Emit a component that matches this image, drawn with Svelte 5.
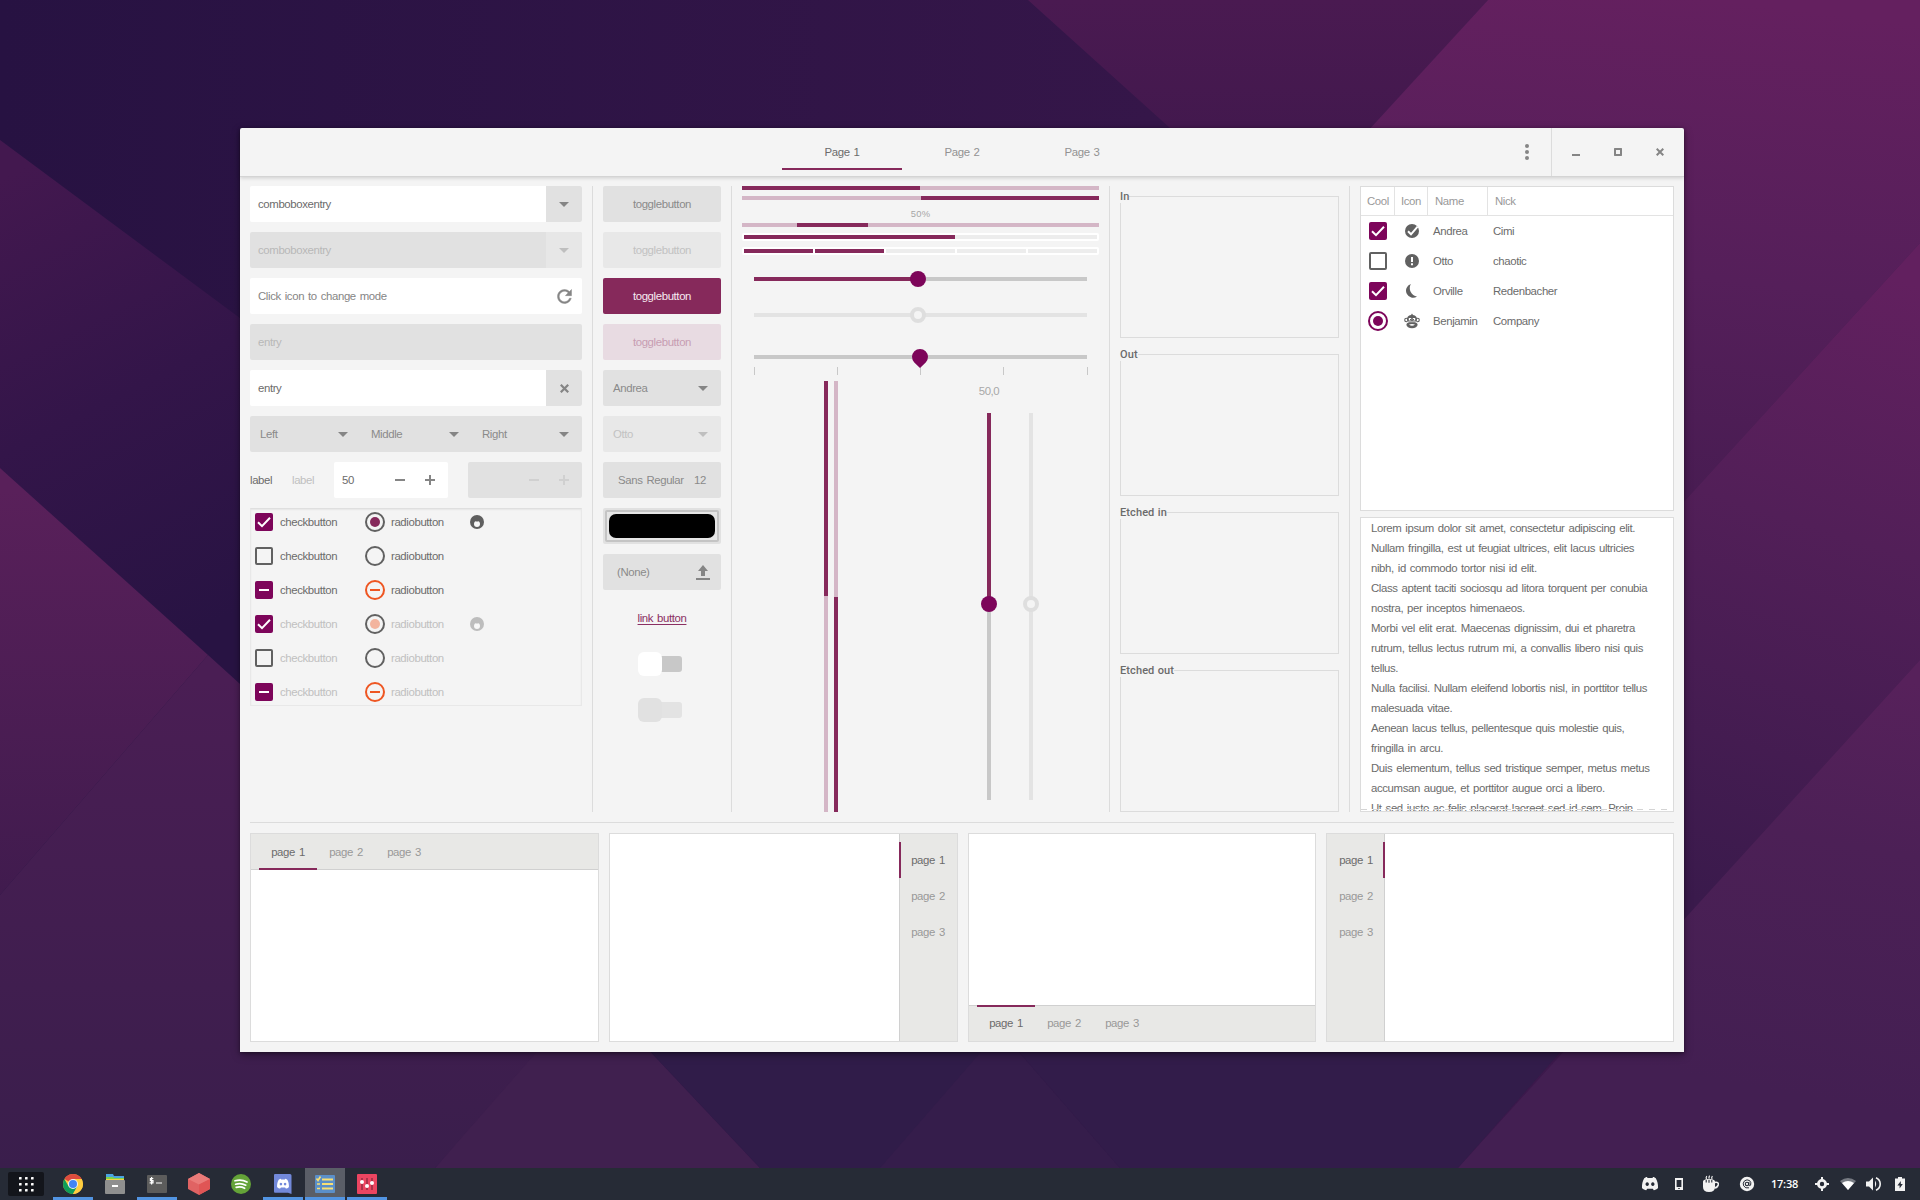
<script lang="ts">
  const headerTabs = ['Page 1', 'Page 2', 'Page 3'];
  const bookTabs = ['page 1', 'page 2', 'page 3'];
  const books = ['top', 'right', 'bottom', 'left'];
  const linked = ['Left', 'Middle', 'Right'];
  const frames = ['In', 'Out', 'Etched in', 'Etched out'];
  const choices = [
    { kind: 'on', disabled: false },
    { kind: 'off', disabled: false },
    { kind: 'mixed', disabled: false },
    { kind: 'on', disabled: true },
    { kind: 'off', disabled: true },
    { kind: 'mixed', disabled: true },
  ];
  const people = [
    { cool: 'on', icon: 'check', name: 'Andrea', nick: 'Cimi' },
    { cool: 'off', icon: 'alert', name: 'Otto', nick: 'chaotic' },
    { cool: 'on', icon: 'moon', name: 'Orville', nick: 'Redenbacher' },
    { cool: 'radio', icon: 'monkey', name: 'Benjamin', nick: 'Company' },
  ];
  const lines = [
    'Lorem ipsum dolor sit amet, consectetur adipiscing elit.',
    'Nullam fringilla, est ut feugiat ultrices, elit lacus ultricies',
    'nibh, id commodo tortor nisi id elit.',
    'Class aptent taciti sociosqu ad litora torquent per conubia',
    'nostra, per inceptos himenaeos.',
    'Morbi vel elit erat. Maecenas dignissim, dui et pharetra',
    'rutrum, tellus lectus rutrum mi, a convallis libero nisi quis',
    'tellus.',
    'Nulla facilisi. Nullam eleifend lobortis nisl, in porttitor tellus',
    'malesuada vitae.',
    'Aenean lacus tellus, pellentesque quis molestie quis,',
    'fringilla in arcu.',
    'Duis elementum, tellus sed tristique semper, metus metus',
    'accumsan augue, et porttitor augue orci a libero.',
    'Ut sed justo ac felis placerat laoreet sed id sem. Proin',
  ];
  const apps = [
    { id: 'chrome', running: true },
    { id: 'files', running: false },
    { id: 'terminal', running: true },
    { id: 'cube', running: false },
    { id: 'spotify', running: false },
    { id: 'discord', running: true },
    { id: 'list', running: true, active: true },
    { id: 'mixer', running: true },
  ];
  const discord =
    'M4.2 4.2 C5.4 3.4 6.4 3.1 7 3 L7.5 3.9 H12.5 L13 3 C13.7 3.1 14.7 3.4 15.8 4.2 C17.4 7 18.2 10 18 14 C16.7 15.4 15.2 16 13.8 16.2 L12.8 14.7 H7.2 L6.2 16.2 C4.8 16 3.3 15.4 2 14 C1.8 10 2.6 7 4.2 4.2 Z M7.2 8.2 a1.7 1.9 0 1 0 .01 0 Z M12.8 8.2 a1.7 1.9 0 1 0 .01 0 Z';
</script>

{#snippet arrow()}
  <svg class="arrow" width="10" height="5" viewBox="0 0 10 5"><path d="M0 0H10L5 5Z" /></svg>
{/snippet}

{#snippet check(kind: string)}
  <svg class="mark" width="18" height="18" viewBox="0 0 18 18">
    {#if kind === 'off'}
      <rect x="1" y="1" width="16" height="16" rx="1" fill="none" stroke="#616161" stroke-width="2" />
    {:else}
      <rect width="18" height="18" rx="2" fill="#7d055a" />
      {#if kind === 'on'}
        <path d="M3 9.3 L7 13.2 L15 4.8" fill="none" stroke="#fff" stroke-width="2" />
      {:else}
        <rect x="4" y="8" width="10" height="2" fill="#fff" />
      {/if}
    {/if}
  </svg>
{/snippet}

{#snippet radio(kind: string, ring: string, dot: string)}
  <svg class="mark" width="20" height="20" viewBox="0 0 20 20">
    <circle cx="10" cy="10" r="9" fill="none" stroke={kind === 'mixed' ? '#ee5622' : ring} stroke-width="2" />
    {#if kind === 'on'}<circle cx="10" cy="10" r="5" fill={dot} />{/if}
    {#if kind === 'mixed'}<rect x="5" y="9" width="10" height="2" fill="#ee5622" />{/if}
  </svg>
{/snippet}

{#snippet spin(value: string, disabled: boolean)}
  <div class={['entry', 'spin', disabled && 'off']}>
    <span>{value}</span>
    <svg width="60" height="30" viewBox="0 0 60 30">
      <path d="M10 15H20M40 15H50M45 10V20" fill="none" stroke="currentColor" stroke-width="2" />
    </svg>
  </div>
{/snippet}

<div class="desktop">
  <svg class="wallpaper" viewBox="0 0 1920 1168" preserveAspectRatio="none">
    <defs>
      <linearGradient id="base" x1="0" y1="0" x2="1" y2="0">
        <stop offset="0" stop-color="#271242" /><stop offset=".6" stop-color="#351649" /><stop offset="1" stop-color="#431c4e" />
      </linearGradient>
      <linearGradient id="mid" x1="0" y1="0" x2="0" y2="1">
        <stop offset="0" stop-color="#4a1a51" /><stop offset="1" stop-color="#3c174b" />
      </linearGradient>
      <linearGradient id="ne" gradientUnits="userSpaceOnUse" x1="1720" y1="0" x2="1660" y2="500">
        <stop offset="0" stop-color="#64205f" /><stop offset=".55" stop-color="#551f5a" /><stop offset="1" stop-color="#481c52" />
      </linearGradient>
      <linearGradient id="e" gradientUnits="userSpaceOnUse" x1="1900" y1="280" x2="1700" y2="900">
        <stop offset="0" stop-color="#62205f" /><stop offset=".4" stop-color="#521f58" /><stop offset="1" stop-color="#3a1a4c" />
      </linearGradient>
      <linearGradient id="se" gradientUnits="userSpaceOnUse" x1="1900" y1="680" x2="1820" y2="1100">
        <stop offset="0" stop-color="#57215b" /><stop offset=".4" stop-color="#4c2056" /><stop offset="1" stop-color="#431f52" />
      </linearGradient>
      <linearGradient id="w" gradientUnits="userSpaceOnUse" x1="0" y1="180" x2="220" y2="620">
        <stop offset="0" stop-color="#43184f" /><stop offset=".5" stop-color="#331549" /><stop offset="1" stop-color="#281343" />
      </linearGradient>
      <linearGradient id="sw" gradientUnits="userSpaceOnUse" x1="0" y1="490" x2="0" y2="900">
        <stop offset="0" stop-color="#59205a" /><stop offset="1" stop-color="#401b4e" />
      </linearGradient>
      <linearGradient id="sw2" gradientUnits="userSpaceOnUse" x1="200" y1="680" x2="200" y2="1168">
        <stop offset="0" stop-color="#4a1e54" /><stop offset="1" stop-color="#3a1e4c" />
      </linearGradient>
    </defs>
    <rect width="1920" height="1168" fill="url(#base)" />
    <path d="M1028 0H1488L1371 128L1300 250L1170 128Z" fill="url(#mid)" />
    <path d="M1488 0H1920V243L1660 528L1300 205Z" fill="url(#ne)" />
    <path d="M1920 243V660L1660 946V528Z" fill="url(#e)" />
    <path d="M1920 660V1168H1458L1660 946Z" fill="url(#se)" />
    <path d="M0 140L260 333V702L0 468Z" fill="url(#w)" />
    <path d="M0 468L208 655L0 895Z" fill="url(#sw)" />
    <path d="M208 655L260 702V1030H560L435 1168H0V895Z" fill="url(#sw2)" />
    <path d="M435 1168L556 1030H630L760 1168Z" fill="#40204f" />
    <path d="M760 1168L630 1030H1000L1120 1168Z" fill="#301c49" />
    <path d="M880 1168L1000 1030L1120 1168Z" fill="#351d4b" />
    <path d="M1120 1168L1000 1030H1580L1458 1168Z" fill="#321c4a" />
  </svg>

  <main class="window">
    <header class="titlebar">
      <div class="lead"></div>
      <nav class="switcher">
        {#each headerTabs as tab, i}
          <span class={['stab', i === 0 && 'current']}>{tab}</span>
        {/each}
      </nav>
      <div class="trail">
        <svg class="menu" width="4" height="16" viewBox="0 0 4 16">
          <circle cx="2" cy="2" r="2" /><circle cx="2" cy="8" r="2" /><circle cx="2" cy="14" r="2" />
        </svg>
        <div class="controls">
          <svg width="8" height="8" viewBox="0 0 8 8"><rect y="6" width="8" height="2" /></svg>
          <svg width="8" height="8" viewBox="0 0 8 8"><path d="M.5 0h7l.5.5v7l-.5.5h-7l-.5-.5v-7zM2 2v4h4V2z" fill-rule="evenodd" /></svg>
          <svg width="8" height="8" viewBox="0 0 8 8"><path d="M.7.7L7.3 7.3M7.3.7L.7 7.3" fill="none" stroke="#858585" stroke-width="2" /></svg>
        </div>
      </div>
    </header>

    <div class="content">
      <div class="upper">
        <section class="col inputs">
          <div class="entry"><span>comboboxentry</span><i class="side">{@render arrow()}</i></div>
          <div class="entry off"><span>comboboxentry</span><i class="side">{@render arrow()}</i></div>
          <div class="entry hint">
            <span>Click icon to change mode</span>
            <i class="tail">
              <svg width="21" height="21" viewBox="0 0 24 24"><path fill="#858585" stroke="#858585" stroke-width=".5" d="M17.65 6.35C16.2 4.9 14.21 4 12 4c-4.42 0-7.99 3.58-7.99 8s3.57 8 7.99 8c3.73 0 6.84-2.55 7.73-6h-2.08c-.82 2.33-3.04 4-5.65 4-3.31 0-6-2.69-6-6s2.69-6 6-6c1.66 0 3.14.69 4.22 1.78L13 11h7V4l-2.35 2.35z" /></svg>
            </i>
          </div>
          <div class="entry off"><span>entry</span></div>
          <div class="entry">
            <span>entry</span>
            <i class="side"><svg width="9" height="9" viewBox="0 0 8 8"><path d="M.7.7L7.3 7.3M7.3.7L.7 7.3" fill="none" stroke="#858585" stroke-width="2" /></svg></i>
          </div>
          <div class="linked">
            {#each linked as item}
              <div class="combo">{item}{@render arrow()}</div>
            {/each}
          </div>
          <div class="labels">
            <span class="lab">label</span>
            <span class="lab dim">label</span>
            {@render spin('50', false)}
            {@render spin('', true)}
          </div>
          <div class="choices">
            {#each choices as c, i}
              <div class={['choice', c.disabled && 'dim']}>
                {@render check(c.kind)}
                <span class="ctext">checkbutton</span>
                {@render radio(c.kind, '#616161', c.disabled ? '#f3b49e' : '#86295b')}
                <span class="rtext">radiobutton</span>
                {#if i % 3 === 0}
                  <svg width="14" height="14" viewBox="0 0 14 14">
                    <circle cx="7" cy="7" r="7" fill={c.disabled ? '#bdbdbd' : '#5f5f5f'} />
                    <circle cx="7" cy="9" r="3" fill="#f8f8f8" />
                    <circle cx="7" cy="6" r=".8" fill={c.disabled ? '#bdbdbd' : '#5f5f5f'} />
                  </svg>
                {/if}
              </div>
            {/each}
          </div>
        </section>

        <section class="col buttons">
          <div class="btn">togglebutton</div>
          <div class="btn off">togglebutton</div>
          <div class="btn active">togglebutton</div>
          <div class="btn active-off">togglebutton</div>
          <div class="btn combo">Andrea{@render arrow()}</div>
          <div class="btn combo off">Otto{@render arrow()}</div>
          <div class="btn font"><span>Sans Regular</span><span>12</span></div>
          <div class="btn color"><div class="well"><div class="swatch"></div></div></div>
          <div class="btn file">
            (None)
            <svg width="14" height="15" viewBox="0 0 14 15"><path d="M7 0L12 6H9V11H5V6H2ZM0 13H14V15H0Z" fill="#858585" /></svg>
          </div>
          <div class="linkrow"><span class="link">link button</span></div>
          <div class="switchrow"><div class="switch"><b></b><em></em></div></div>
          <div class="switchrow"><div class="switch off"><b></b><em></em></div></div>
        </section>

        <section class="col ranges">
          <div class="progress"><i class="p50"></i></div>
          <div class="progress end"><i class="p50"></i></div>
          <div class="percent">50%</div>
          <div class="progress pulse"><i></i></div>
          <div class="level"><i class="full sixty"></i><i class="rest"></i></div>
          <div class="level blocks">
            {#each [1, 1, 0, 0, 0] as b}<i class={b ? 'full' : 'rest'}></i>{/each}
          </div>
          <svg class="hscale" width="334" height="108" viewBox="0 0 334 108">
            <path d="M0 12H333" stroke="#c8c8c8" stroke-width="4" />
            <path d="M0 12H164" stroke="#86295b" stroke-width="4" />
            <circle cx="164" cy="12" r="8" fill="#7d055a" />
            <path d="M0 48H333" stroke="#e3e3e3" stroke-width="4" />
            <circle cx="164" cy="48" r="6" fill="#f4f4f4" stroke="#dedede" stroke-width="4" />
            <path d="M0 90H333" stroke="#c8c8c8" stroke-width="4" />
            <path d="M.5 100V108M83.5 100V108M166.5 100V108M249.5 100V108M333.5 100V108" stroke="#c8c8c8" />
            <path d="M166 101L160.3 95.5A8 8 0 1 1 171.7 95.5Z" fill="#7d055a" />
          </svg>
          <div class="verticals">
            <div class="vbars"><i></i><i class="inv"></i></div>
            <div class="vscales">
              <div class="vvalue">50,0</div>
              <div class="vtracks">
                <div class="vtrack"><b></b></div>
                <div class="vtrack disabled"><b></b></div>
              </div>
            </div>
          </div>
        </section>

        <section class="col frames">
          {#each frames as f}
            <div class="frame"><span>{f}</span></div>
          {/each}
        </section>

        <section class="col lists">
          <div class="tree">
            <div class="trow thead"><span>Cool</span><span>Icon</span><span>Name</span><span>Nick</span></div>
            {#each people as p}
              <div class="trow">
                <span class="cell">
                  {#if p.cool === 'radio'}{@render radio('on', '#7d055a', '#7d055a')}{:else}{@render check(p.cool)}{/if}
                </span>
                <span class="cell">
                  <svg width="16" height="16" viewBox="0 0 16 16" fill="#616161">
                    {#if p.icon === 'check'}
                      <circle cx="8" cy="8" r="7" />
                      <path d="M4 8.3L7 11.3L13.6 3.6" fill="none" stroke="#fff" stroke-width="2" />
                    {:else if p.icon === 'alert'}
                      <circle cx="8" cy="8" r="7" />
                      <path d="M7 4h2v5H7zM7 10.2h2v2H7z" fill="#fff" />
                    {:else if p.icon === 'moon'}
                      <path d="M6.8 1A7 7 0 1 0 13 13.4A8.4 8.4 0 0 1 6.8 1Z" />
                    {:else}
                      <circle cx="2.4" cy="7" r="1.7" fill="none" stroke="#616161" stroke-width="1.1" />
                      <circle cx="13.6" cy="7" r="1.7" fill="none" stroke="#616161" stroke-width="1.1" />
                      <path d="M8 .5L9 2A5 4.5 0 0 1 13 6.5L12 9H4L3 6.5A5 4.5 0 0 1 7 2Z" />
                      <ellipse cx="8" cy="11.8" rx="5.6" ry="3.4" />
                      <path d="M4.8 5h2.4v2.4H4.8zM8.8 5h2.4v2.4H8.8z" fill="#fff" />
                      <path d="M6 6h1v1.2H6zM9 6h1v1.2H9z" />
                      <path d="M5 11.4Q8 10.4 11 11.4Q8 14 5 11.4Z" fill="#fff" />
                      <path d="M3.4 8.8H12.6" stroke="#fff" stroke-width=".7" />
                    {/if}
                  </svg>
                </span>
                <span>{p.name}</span><span>{p.nick}</span>
              </div>
            {/each}
          </div>
          <div class="textview">
            {#each lines as line}<p>{line}</p>{/each}
            <div class="undershoot"></div>
          </div>
        </section>
      </div>

      <div class="rule"></div>

      <div class="books">
        {#each books as side}
          <div class={['book', side]}>
            <div class="strip">
              {#each bookTabs as tab, i}
                <span class={['btab', i === 0 && 'current']}>{tab}</span>
              {/each}
            </div>
            <div class="sheet"></div>
          </div>
        {/each}
      </div>
    </div>
  </main>

  <footer class="panel">
    <div class="launcher">
      <svg width="15" height="15" viewBox="0 0 15 15" fill="#fff">
        {#each [0, 6, 12] as y}{#each [0, 6, 12] as x}<rect {x} {y} width="2.6" height="2.6" rx=".5" />{/each}{/each}
      </svg>
    </div>
    <div class="apps">
      {#each apps as app}
        <div class={['task', app.running && 'running', app.active && 'focused']}>
          <svg width="22" height="22" viewBox="-1 -1 22 22">
            {#if app.id === 'chrome'}
              <circle cx="10" cy="10" r="10" fill="#ffcd40" />
              <path d="M10 10L1.34 5A10 10 0 0 1 18.66 5Z" fill="#dd4b3e" />
              <path d="M1.34 5A10 10 0 0 0 10 20L14.3 12.5L10 10L5.7 12.5Z" fill="#0f9d58" />
              <path d="M10 5H18.66A10 10 0 0 1 10 20L14.3 12.5Z" fill="#ffcd40" />
              <circle cx="10" cy="10" r="5" fill="#f1f1f1" />
              <circle cx="10" cy="10" r="4" fill="#4285f4" />
            {:else if app.id === 'files'}
              <path d="M1 0H8L9 2H19V6H1Z" fill="#4aa3e0" />
              <path d="M1 3H8L9 4H19V7H1Z" fill="#7fd14b" />
              <path d="M1 5H19V8H1Z" fill="#f3d14a" />
              <rect y="6" width="20" height="14" rx="1" fill="#8f8f8f" />
              <rect x="7" y="11" width="6" height="2" fill="#fff" />
            {:else if app.id === 'terminal'}
              <rect y="1" width="20" height="18" rx="1" fill="#5c5c5c" />
              <path d="M6.3 4.5H3.4V6.7H6V8.9H2.6M4.6 3V10.4M9 9H15" fill="none" stroke="#fff" stroke-width="1.2" />
            {:else if app.id === 'cube'}
              <path d="M10 -1L21 5V15L10 21L-1 15V5Z" fill="#e06363" />
              <path d="M10 -1L21 5L10 10.5L-1 5Z" fill="#ea7b79" />
              <path d="M10 10.5L21 5V15L10 21Z" fill="#e05555" />
            {:else if app.id === 'spotify'}
              <circle cx="10" cy="10" r="10" fill="#64a338" />
              <path d="M4 6.8Q10.5 5 16 8M4.6 10.2Q10 8.6 14.8 11.2M5.2 13.4Q9.8 12.2 13.6 14.3" fill="none" stroke="#fff" stroke-width="1.7" stroke-linecap="round" />
            {:else if app.id === 'discord'}
              <path d="M2 0H17Q18.5 0 18.5 1.5V20L15 18.8H2Q1 18.8 1 17.5V1Q1 0 2 0Z" fill="#7289da" />
              <g transform="translate(2.6 2.6) scale(.74)"><path d={discord} fill="#fff" fill-rule="evenodd" /></g>
            {:else if app.id === 'list'}
              <rect y="1" width="20" height="18" rx="1" fill="#5b8fc9" />
              <path d="M7 5.5H18M7 10H18M7 14.5H18" stroke="#f9df73" stroke-width="2" />
              <path d="M2 10H5M2 14.5H5M1.5 4.5L3 6.5L5.5 2.5" fill="none" stroke="#f9df73" stroke-width="1.6" />
            {:else}
              <rect width="20" height="20" rx="1" fill="#ec4561" />
              <path d="M5 4V16M10 4V16M15 4V16" stroke="#8f2c41" stroke-width="1.4" />
              <circle cx="5" cy="8" r="2" fill="#fff" /><circle cx="10" cy="12" r="2" fill="#fff" /><circle cx="15" cy="9" r="2" fill="#fff" />
            {/if}
          </svg>
        </div>
      {/each}
    </div>
    <div class="tray">
      <svg width="20" height="20" viewBox="0 0 20 20"><path d={discord} fill="#f2f2f2" fill-rule="evenodd" /></svg>
      <svg width="8" height="12" viewBox="0 0 8 12"><path d="M0 0H8V12H0ZM1.6 2V9H6.4V2ZM3 10.2V11H5V10.2Z" fill="#f2f2f2" fill-rule="evenodd" /></svg>
      <svg width="18" height="18" viewBox="0 0 18 18">
        <path d="M1 6.5C1 3 13 3 13 6.5V12Q13 17 7 17Q1 17 1 12Z" fill="#f2f2f2" />
        <path d="M12.5 7.5Q17 6.5 16.2 10Q15.5 12.5 12.5 13" fill="none" stroke="#f2f2f2" stroke-width="1.6" />
        <path d="M4.2 7.5V5M7 7.8V4.8M9.8 7.5V5" stroke="#262b36" stroke-width="1.1" />
        <path d="M4.5 4Q3.6 2.6 4.8 1M7.3 3.6Q6.4 2.2 7.6.6M10 4Q9.2 2.6 10.4 1" fill="none" stroke="#f2f2f2" stroke-width="1.2" />
      </svg>
      <svg width="16" height="16" viewBox="0 0 16 16">
        <circle cx="8" cy="8" r="7.2" fill="#f2f2f2" />
        <circle cx="8" cy="8" r="1.7" fill="none" stroke="#262b36" stroke-width="1.1" />
        <path d="M9.9 6V8.8Q10.4 10.2 11.6 9.2Q12.6 6.4 10.6 4.6Q8 3 5.6 4.8Q3.4 7 4.6 9.8Q6.4 12.8 10 11.8" fill="none" stroke="#262b36" stroke-width="1" />
      </svg>
      <span class="clock">17:38</span>
      <svg width="14" height="14" viewBox="0 0 14 14">
        <circle cx="7" cy="7" r="3.6" fill="none" stroke="#f2f2f2" stroke-width="2.8" />
        <path d="M7 0V3M7 11V14M0 7H3M11 7H14" stroke="#f2f2f2" stroke-width="2" />
      </svg>
      <svg width="16" height="12" viewBox="0 0 16 12">
        <path d="M0 3Q8 -3 16 3L8 12Z" fill="#767a82" /><path d="M2 5Q8 1 14 5L8 12Z" fill="#fff" />
      </svg>
      <svg width="16" height="14" viewBox="0 0 16 14">
        <path d="M0 4.5H3L7 .5V13.5L3 9.5H0Z" fill="#f2f2f2" />
        <path d="M9 3.6Q11.4 7 9 10.4Z" fill="#f2f2f2" /><path d="M10 .8Q14.2 2.6 14.2 7T10 13.2" fill="none" stroke="#f2f2f2" stroke-width="1.6" />
      </svg>
      <svg width="10" height="14" viewBox="0 0 10 14">
        <path d="M3 0H7V1.5H10V14H0V1.5H3Z" fill="#f2f2f2" /><path d="M5.8 4L2.4 8.4H4.6V11.4L7.8 7H5.8Z" fill="#262b36" />
      </svg>
    </div>
  </footer>
</div>

<style>
  :global(body) { margin: 0; overflow: hidden; }
  .desktop {
    position: relative; width: 1920px; height: 1200px; overflow: hidden; background: #331648;
    display: flex; flex-direction: column; justify-content: flex-end;
    font: 11.4px/16px 'Liberation Sans', Arial, sans-serif; letter-spacing: -.38px; word-spacing: 1.15px; color: #6b6b6b;
  }
  .desktop *, .desktop { box-sizing: border-box; }
  svg { display: block; flex: none; }
  .wallpaper { position: absolute; inset: 0 0 32px; width: 1920px; height: 1168px; }

  .window {
    position: absolute; left: 240px; top: 128px; width: 1444px; height: 924px;
    display: flex; flex-direction: column; background: #f4f4f4; border-radius: 2px 2px 0 0;
    box-shadow: 0 3px 8px rgba(0, 0, 0, .35), 0 1px 3px rgba(0, 0, 0, .3);
  }
  .titlebar {
    height: 49px; flex: none; display: grid; grid-template-columns: 1fr 360px 1fr;
    border-bottom: 1px solid #d4d4d4; box-shadow: 0 1px 4px rgba(0, 0, 0, .16);
  }
  .switcher { display: grid; grid-template-columns: repeat(3, 120px); }
  .stab { height: 42px; padding-top: 16px; text-align: center; color: #929292; }
  .stab.current { color: #6b6b6b; border-bottom: 2px solid #86295b; }
  .trail { display: flex; justify-content: flex-end; align-items: center; fill: #858585; }
  .menu { margin-right: 22px; }
  .controls { height: 48px; width: 133px; padding-left: 20px; display: flex; align-items: center; gap: 34px; border-left: 1px solid #dcdcdc; }

  .content { flex: 1; padding: 9px 10px 10px; display: flex; flex-direction: column; }
  .upper { display: flex; height: 626px; }
  .col { display: flex; flex-direction: column; flex: none; }
  .col + .col { margin-left: 10px; padding-left: 10px; border-left: 1px solid #dcdcdc; }
  .inputs { width: 332px; gap: 10px; }
  .buttons { width: 129px; gap: 10px; }
  .ranges { width: 368px; }
  .frames { width: 230px; }
  .lists { width: 325px; gap: 6px; }
  .arrow { fill: #858585; }

  .entry { height: 36px; display: flex; align-items: center; justify-content: space-between; padding-left: 8px; background: #fff; border-radius: 2px; overflow: hidden; }
  .side, .tail { width: 36px; height: 36px; display: grid; place-items: center; }
  .side { background: #e1e1e1; }
  .hint { color: #858585; }
  .off.entry { background: #e1e1e1; color: #b8b8b8; }
  .off .side { background: #e7e7e7; }
  .off .arrow { fill: #bfbfbf; }
  .linked { display: grid; grid-template-columns: 111px 111px 110px; height: 36px; background: #e1e1e1; border-radius: 2px; }
  .combo { display: flex; align-items: center; justify-content: space-between; padding: 0 13px 0 10px; color: #8a8a8a; }
  .labels { display: flex; align-items: center; gap: 20px; height: 36px; }
  .lab { width: 22px; }
  .dim { color: #c0c0c0; }
  .spin { width: 114px; padding-right: 3px; }
  .spin svg { color: #858585; }
  .spin.off svg { color: #d0d0d0; }
  .choices { height: 198px; padding-top: 3px; padding-left: 4px; display: flex; flex-direction: column; gap: 14px; border: 1px solid #e8e8e8; border-top-color: #dfdfdf; box-shadow: inset 0 1px 2px rgba(0, 0, 0, .06); }
  .choice { height: 20px; display: flex; align-items: center; flex: none; }
  .ctext { width: 85px; margin-left: 7px; }
  .rtext { width: 79px; margin-left: 6px; }

  .btn { height: 36px; flex: none; display: flex; align-items: center; justify-content: center; background: #e1e1e1; color: #8a8a8a; border-radius: 2px; }
  .btn.off { background: #e8e8e8; color: #c2c2c2; }
  .btn.active { background: #86295b; color: #f6e9f0; }
  .btn.active-off { background: #e8dbe2; color: #c79db2; }
  .btn.combo { justify-content: space-between; padding: 0 13px 0 10px; }
  .btn.font { justify-content: space-between; padding: 0 15px; }
  .btn.color { padding: 2px; }
  .well { flex: 1; height: 32px; padding: 2px; border: 2px solid #c4c4c4; border-radius: 2px; background: #e6e6e6; }
  .swatch { height: 24px; border-radius: 7px; background: #000; }
  .btn.file { justify-content: space-between; padding: 0 11px 0 14px; }
  .linkrow, .switchrow { height: 36px; display: flex; align-items: center; justify-content: center; }
  .link { color: #8a2f62; text-decoration: underline; text-underline-offset: 2px; line-height: 16px; }
  .switch { width: 48px; display: flex; align-items: center; }
  .switch b { width: 24px; height: 24px; border-radius: 6px; background: #fff; z-index: 1; }
  .switch em { width: 24px; height: 16px; margin-left: -4px; border-radius: 3px; background: #c8c8c8; }
  .switch.off b { background: #e1e1e1; }
  .switch.off em { background: #e3e3e3; }

  .progress { height: 4px; flex: none; background: #d4b6c6; margin-bottom: 6px; display: flex; }
  .progress i { height: 4px; background: #86295b; }
  .p50 { width: 178px; }
  .end { justify-content: flex-end; margin-bottom: 0; }
  .percent { height: 23px; padding-top: 6px; text-align: center; font-size: 9.4px; letter-spacing: .2px; color: #a6a6a6; }
  .pulse i { width: 71px; margin-left: 55px; }
  .level { height: 8px; flex: none; display: flex; padding: 2px; background: #fff; border-radius: 2px; margin-bottom: 6px; }
  .full { background: #86295b; }
  .rest { background: #ededed; flex: 1; }
  .sixty { width: 211px; }
  .blocks { gap: 2px; margin-bottom: 12px; }
  .blocks i { flex: 1; }
  .hscale { margin-left: 12px; }
  .verticals { display: flex; flex: 1; padding-top: 6px; }
  .vbars { display: flex; gap: 6px; margin-left: 82px; }
  .vbars i { width: 4px; background: linear-gradient(#86295b 215px, #d4b6c6 215px); }
  .vbars .inv { background: linear-gradient(#d4b6c6 216px, #86295b 216px); }
  .vscales { margin-left: 135px; padding-top: 2px; display: flex; flex-direction: column; }
  .vvalue { width: 32px; height: 30px; text-align: center; color: #a8a8a8; }
  .vtracks { display: flex; gap: 26px; padding-left: 8px; }
  .vtrack { width: 16px; height: 387px; padding-top: 183px; background: linear-gradient(#86295b 191px, #c8c8c8 191px) center / 4px 100% no-repeat; }
  .vtrack b { display: block; width: 16px; height: 16px; border-radius: 8px; background: #7d055a; }
  .vtrack.disabled { background: linear-gradient(#e3e3e3, #e3e3e3) center / 4px 100% no-repeat; }
  .disabled b { background: #f4f4f4; border: 4px solid #dedede; }

  .frames { padding-top: 10px; gap: 16px; }
  .frame { height: 142px; flex: none; border: 1px solid #dcdcdc; }
  .frame span { display: block; width: fit-content; height: 12px; margin: -6px 0 0 -1px; background: #f4f4f4; font: 500 11px/12px Roboto, sans-serif; letter-spacing: .1px; word-spacing: .5px; color: #6b6b6b; }

  .tree { height: 325px; border: 1px solid #dcdcdc; background: #fff; }
  .trow { display: grid; grid-template-columns: 34px 33px 60px 1fr; height: 30px; align-items: center; }
  .trow span { padding-left: 5px; }
  .trow .cell { padding: 0; display: grid; place-items: center; }
  .thead { height: 29px; border-bottom: 1px solid #e3e3e3; color: #999; }
  .trow.thead span { height: 28px; line-height: 28px; padding-left: 6px; border-right: 1px solid #e3e3e3; }
  .trow.thead span:nth-child(n + 3) { padding-left: 7px; }
  .trow.thead span:last-child { border: 0; }
  .textview { position: relative; height: 295px; border: 1px solid #dcdcdc; background: #fff; padding-left: 10px; overflow: hidden; }
  .textview p { margin: 0; height: 20px; line-height: 20px; white-space: nowrap; }
  .undershoot { position: absolute; left: 0; right: 0; bottom: 1px; height: 1px; background: repeating-linear-gradient(90deg, #d4d4d4 0 6px, #fff 6px 12px); }

  .rule { height: 1px; margin: 10px 0; background: #dcdcdc; flex: none; }
  .books { flex: 1; display: grid; grid-template-columns: 349px 349px 348px 348px; gap: 10px; }
  .book { display: flex; border: 1px solid #dcdcdc; background: #fff; }
  .sheet { flex: 1; }
  .strip { display: flex; background: #e8e8e6; flex: none; color: #989898; }
  .btab { text-align: center; }
  .btab.current { color: #6b6b6b; }
  .top { flex-direction: column; }
  .bottom { flex-direction: column-reverse; }
  .right { flex-direction: row-reverse; }
  .top .strip, .bottom .strip { height: 36px; padding-left: 8px; }
  .top .btab, .bottom .btab { width: 58px; height: 36px; line-height: 36px; }
  .left .strip, .right .strip { width: 58px; flex-direction: column; padding-top: 8px; }
  .left .btab, .right .btab { height: 36px; line-height: 36px; }
  .top .strip { box-shadow: inset 0 -1px #d0d0d0; }
  .top .current { box-shadow: inset 0 -2px #86295b; }
  .bottom .strip { box-shadow: inset 0 1px #d0d0d0; }
  .bottom .current { box-shadow: inset 0 2px #86295b; }
  .right .strip { box-shadow: inset 1px 0 #d0d0d0; }
  .right .current { box-shadow: inset 2px 0 #86295b; }
  .left .strip { box-shadow: inset -1px 0 #d0d0d0; }
  .left .current { box-shadow: inset -2px 0 #86295b; }

  .panel { position: relative; height: 32px; display: flex; align-items: center; background: #262b36; padding-left: 8px; }
  .launcher { width: 36px; height: 24px; display: grid; place-items: center; background: #13151b; border-radius: 2px; }
  .apps { display: flex; gap: 2px; margin-left: 9px; }
  .task { width: 40px; height: 32px; display: grid; place-items: center; }
  .running { box-shadow: inset 0 -3px #5294e2; }
  .focused { background: #5a5e67; }
  .tray { display: grid; grid-template-columns: 36px 22px 42px 30px 45px 30px 22px 30px 22px; place-items: center; margin-left: auto; margin-right: 9px; }
  .clock { font: 600 11px/16px 'Open Sans', sans-serif; letter-spacing: -.2px; color: #fff; }
</style>
